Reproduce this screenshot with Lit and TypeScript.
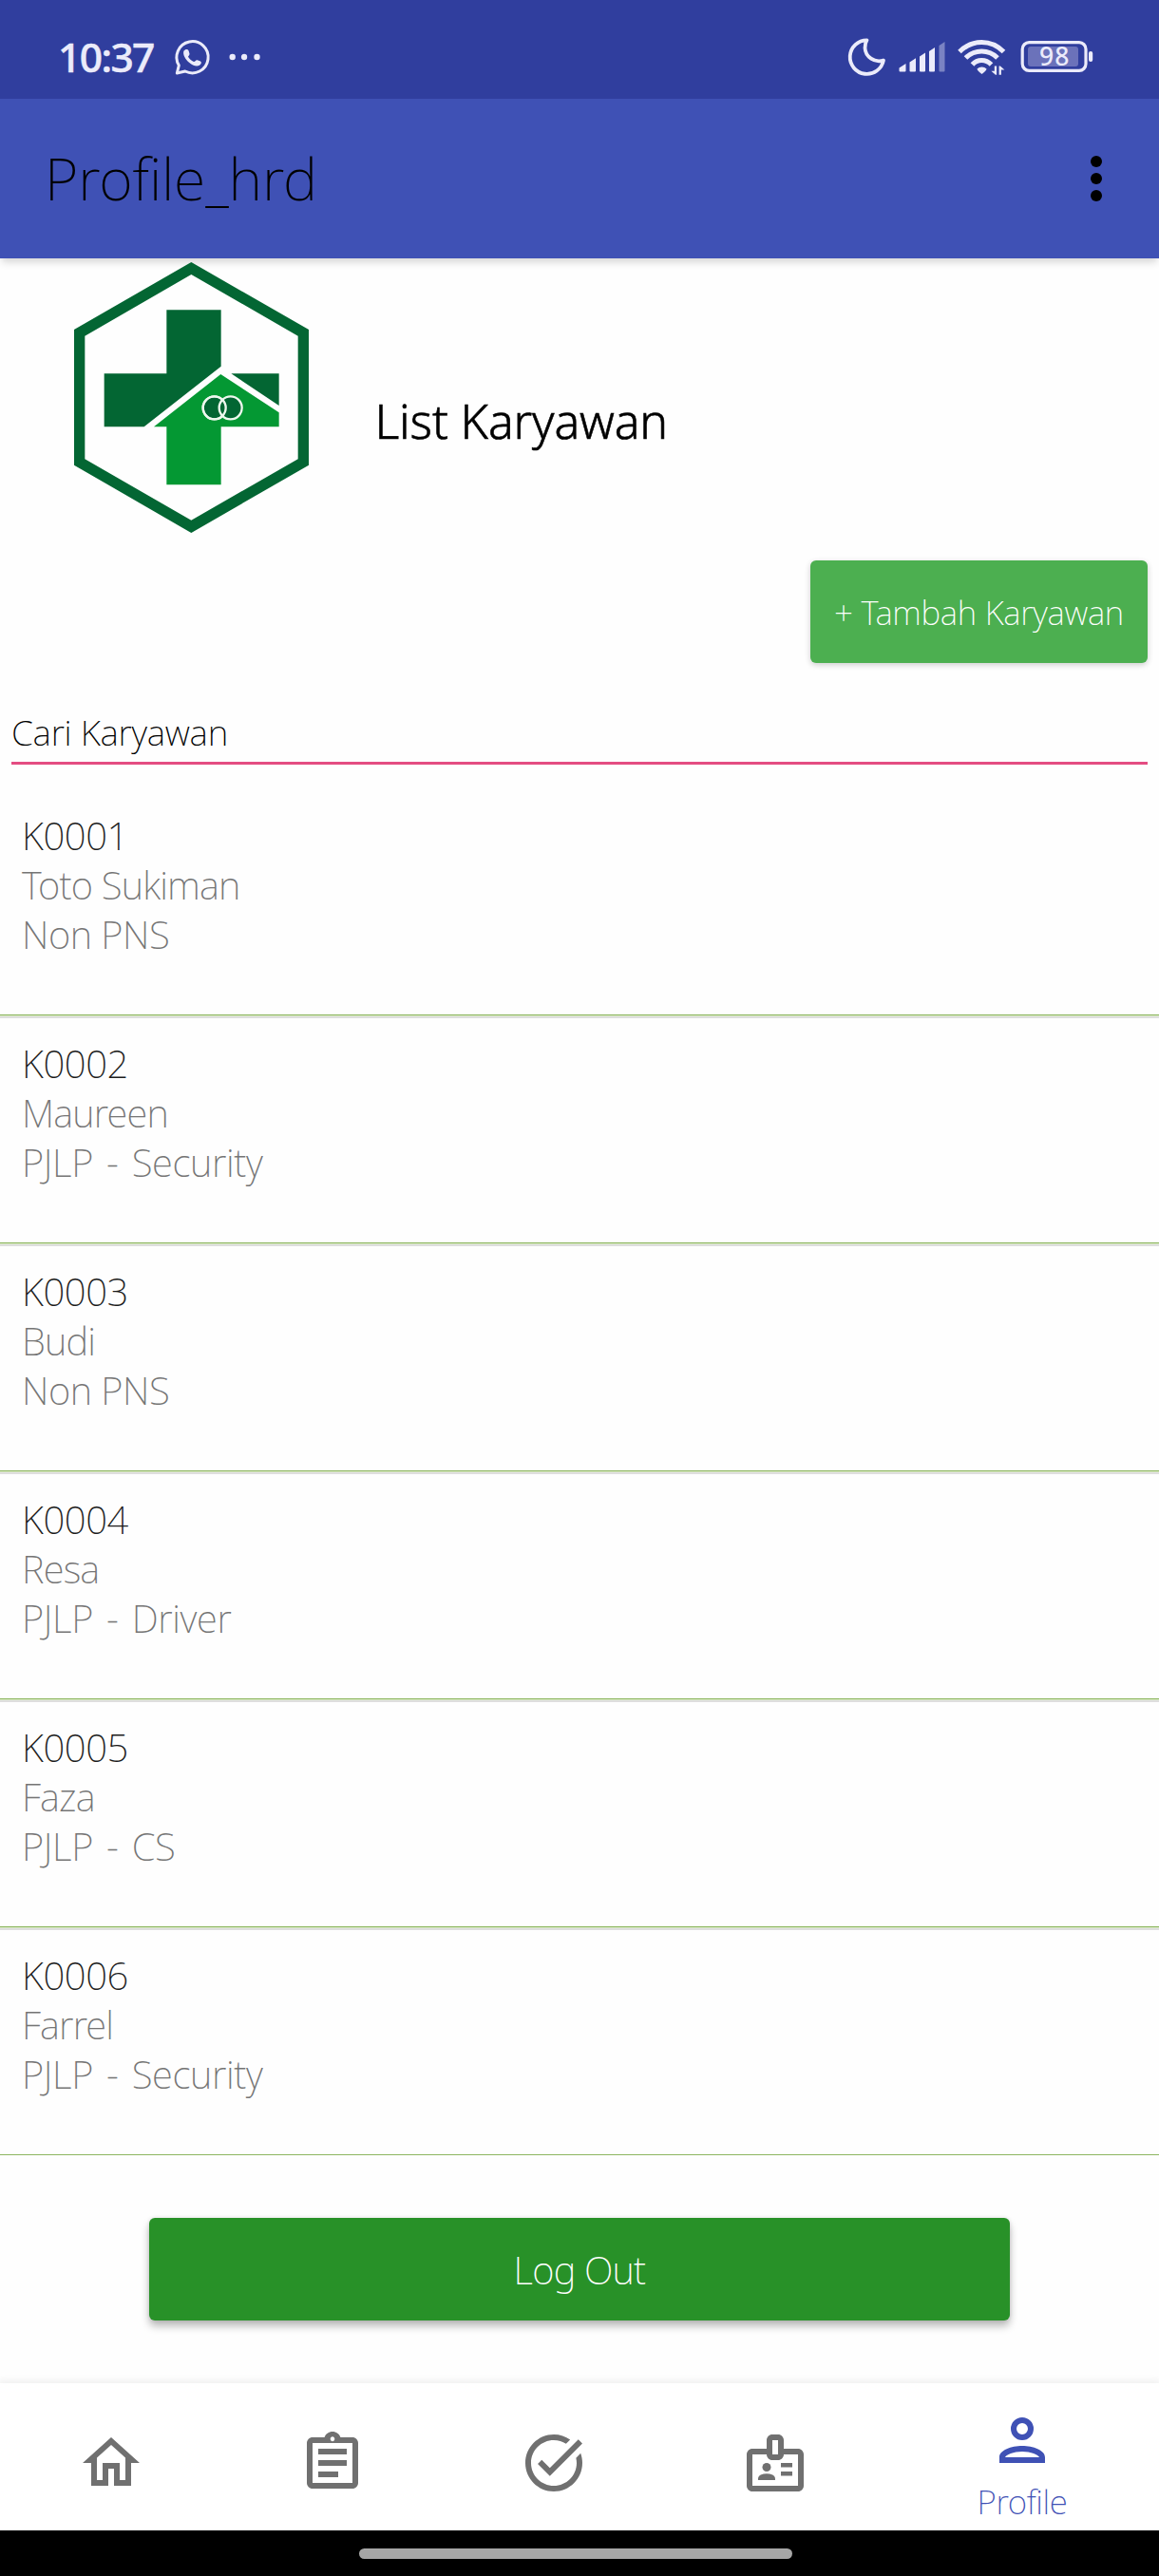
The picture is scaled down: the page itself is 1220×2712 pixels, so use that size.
import { LitElement, html, css, svg } from "lit";
import { customElement } from "lit/decorators.js";
import { classMap } from "lit/directives/class-map.js";

interface Employee {
  id: string;
  name: string;
  role: string;
}

const employees: Employee[] = [
  { id: "K0001", name: "Toto Sukiman", role: "Non PNS" },
  { id: "K0002", name: "Maureen", role: "PJLP - Security" },
  { id: "K0003", name: "Budi", role: "Non PNS" },
  { id: "K0004", name: "Resa", role: "PJLP - Driver" },
  { id: "K0005", name: "Faza", role: "PJLP - CS" },
  { id: "K0006", name: "Farrel", role: "PJLP - Security" },
];

const navIcons = [
  // home
  svg`<path d="M12 5.69l5 4.5V18h-2v-6H9v6H7v-7.81l5-4.5M12 3L2 12h3v8h6v-6h2v6h6v-8h3L12 3z"/>`,
  // clipboard
  svg`<path fill-rule="evenodd" d="M19 3h-4.18C14.4 1.84 13.3 1 12 1s-2.4.84-2.82 2H5c-1.1 0-2 .9-2 2v14c0 1.1.9 2 2 2h14c1.1 0 2-.9 2-2V5c0-1.1-.9-2-2-2zm-7-.25c.41 0 .75.34.75.75v.2c0 .41-.34.75-.75.75s-.75-.34-.75-.75v-.2c0-.41.34-.75.75-.75zM19 19H5V5h14v14z"/><path d="M7 7h10v2H7zM7 11h10v2H7zM7 15h7v2H7z"/>`,
  // task done
  svg`<path d="M22 5.18L10.59 16.6l-4.24-4.24 1.41-1.41 2.83 2.83 10-10L22 5.18zM19.79 10.22c.13.57.21 1.17.21 1.78 0 4.42-3.58 8-8 8s-8-3.58-8-8 3.58-8 8-8c1.58 0 3.04.46 4.28 1.25l1.44-1.44C16.1 2.67 14.13 2 12 2 6.48 2 2 6.48 2 12s4.48 10 10 10 10-4.48 10-10c0-1.19-.22-2.33-.6-3.39l-1.61 1.61z"/>`,
  // badge
  svg`<path fill-rule="evenodd" d="M20 7h-5V4c0-1.1-.9-2-2-2h-2c-1.1 0-2 .9-2 2v3H4c-1.1 0-2 .9-2 2v11c0 1.1.9 2 2 2h16c1.1 0 2-.9 2-2V9c0-1.1-.9-2-2-2zM11 4h2v5h-2V4zm9 16H4V9h5c0 1.1.9 2 2 2h2c1.1 0 2-.9 2-2h5v11z"/><circle cx="9" cy="13.5" r="1.5"/><path d="M11.08 16.18C10.44 15.9 9.74 15.75 9 15.75s-1.44.15-2.08.43c-.56.24-.92.78-.92 1.39V18h6v-.43c0-.61-.36-1.15-.92-1.39zM14 15h4v1.5h-4zM14 12h4v1.5h-4z"/>`,
];

@customElement("app-root")
export class AppRoot extends LitElement {
  static styles = css`
    :host {
      display: block;
      font-family: "Noto Sans", Roboto, sans-serif;
      font-weight: 250;
      font-variant-ligatures: none;
      color: #000;
    }
    * {
      box-sizing: border-box;
    }
    svg {
      display: block;
      flex: none;
    }
    .screen {
      width: 1220px;
      height: 2712px;
      display: flex;
      flex-direction: column;
      background: #fefefe;
      overflow: hidden;
      white-space: nowrap;
    }
    .status {
      height: 104px;
      flex: none;
      display: flex;
      align-items: center;
      padding: 16px 66px 0 61px;
      background: #303e9e;
      color: #ebebfa;
    }
    .clock {
      width: 119px;
      font-size: 42.5px;
      font-weight: 500;
      letter-spacing: -1.6px;
      line-height: 60px;
      -webkit-text-stroke: 0.5px #ebebfa;
    }
    .status-right {
      margin-left: auto;
    }
    .pct {
      font-size: 26.5px;
      font-weight: 500;
      letter-spacing: 1px;
    }
    .appbar {
      height: 168px;
      flex: none;
      display: flex;
      align-items: center;
      justify-content: space-between;
      padding: 0 60px 0 47px;
      background: #3f51b5;
      box-shadow: 0 6px 8px -2px rgba(0, 0, 0, 0.16);
    }
    .title {
      font-size: 61px;
      line-height: 84px;
      letter-spacing: -0.15px;
    }
    .head {
      height: 318px;
      flex: none;
      display: flex;
      padding: 4px 0 0 78px;
    }
    .heading {
      margin-left: 69.5px;
      padding-top: 132px;
      font-size: 50px;
      font-weight: 300;
      line-height: 70px;
      letter-spacing: -0.15px;
      -webkit-text-stroke: 0.6px #000;
    }
    .actions {
      flex: none;
      display: flex;
      justify-content: flex-end;
      padding-right: 12px;
    }
    .btn {
      height: 108px;
      border-radius: 6px;
      display: flex;
      align-items: center;
      justify-content: center;
      color: #fff;
    }
    .add {
      width: 355px;
      background: #4caf50;
      font-size: 35px;
      letter-spacing: -0.3px;
      box-shadow: 0 2px 6px rgba(0, 0, 0, 0.2);
    }
    .search {
      height: 107px;
      flex: none;
      margin: 0 12px;
      padding-top: 48px;
      border-bottom: 3px solid #e44d82;
      font-size: 37px;
      line-height: 50px;
      letter-spacing: -0.25px;
    }
    .list {
      flex: none;
      padding-top: 27px;
    }
    .item {
      height: 240px;
      padding: 22px 23px 0;
      font-size: 40px;
      line-height: 52px;
      color: #757575;
      border-bottom: 2px solid #dedede;
      display: flex;
      flex-direction: column;
    }
    .item::after {
      content: "";
      box-sizing: border-box;
      margin: auto -23px 0;
      height: 2px;
      flex: none;
      background: #d9e8c5;
      border-top: 1px solid #8db660;
    }
    .item:last-child {
      height: 237px;
      border-bottom: 0;
    }
    .item:last-child::after {
      height: 1px;
    }
    .id {
      color: #1c1c1c;
      letter-spacing: -0.4px;
    }
    .name {
      letter-spacing: -0.8px;
    }
    .role {
      letter-spacing: -0.5px;
    }
    .role.dashed {
      letter-spacing: -0.35px;
      word-spacing: 4px;
    }
    .footer {
      flex: 1;
      display: flex;
      justify-content: center;
      align-items: flex-start;
      padding-top: 66px;
    }
    .logout {
      width: 906px;
      background: #289128;
      font-size: 40px;
      letter-spacing: -0.8px;
      box-shadow: 0 6px 9px rgba(0, 0, 0, 0.27), 0 0 4px rgba(0, 0, 0, 0.1);
    }
    .nav {
      height: 155px;
      flex: none;
      display: flex;
      background: #fff;
      box-shadow: 0 0 8px 2px rgba(0, 0, 0, 0.07);
      fill: #707070;
    }
    .tab {
      width: 233px;
      padding-top: 48px;
      display: flex;
      justify-content: center;
    }
    .tab.active {
      width: 288px;
      padding-top: 24px;
      flex-direction: column;
      justify-content: flex-start;
      align-items: center;
      color: #3f51b5;
      fill: #3f51b5;
      font-size: 35px;
      line-height: 48px;
      letter-spacing: -0.4px;
    }
    .label {
      padding-top: 5px;
    }
    .gesture {
      height: 48px;
      flex: none;
      background: #000;
      display: flex;
      justify-content: center;
      padding: 19px 8px 0 0;
    }
    .pill {
      width: 456px;
      height: 11px;
      border-radius: 6px;
      background: #a6a6a6;
    }
  `;

  private statusBar() {
    return html`<div class="status">
      <span class="clock">10:37</span>
      <svg width="100" height="44" viewBox="180 38 100 44">
        <path d="M186.3 77l2-8.2a16.6 16.6 0 1 1 6.6 6.2z" fill="none" stroke="#ebebfa" stroke-width="3" stroke-linejoin="round"/>
        <path d="M193.5 53.5c1.5-2 4-2.2 5-.2l1 3.2c.3 1.6-1.5 2.4-1.5 3.3 1.2 2.2 3.4 4.2 6 5.2 1.2.2 2-2.3 3.8-1.8l3.2 1.4c1.6 1 .6 3.4-1 4.2-3 1.6-7.5.2-11-3-3.8-3.5-7-8.3-5.5-12.3z" fill="#ebebfa"/>
        <g fill="#ebebfa"><circle cx="244.7" cy="60" r="3.2"/><circle cx="257" cy="60" r="3.2"/><circle cx="270.5" cy="60" r="3.2"/></g>
      </svg>
      <svg class="status-right" width="264" height="44" viewBox="890 38 264 44">
        <path d="M912.5 42.3A17.8 17.8 0 1 0 930 63.5C920.5 66.5 911 60 910.5 50.5 910.4 47.5 911 44.6 912.5 42.3z" fill="none" stroke="#ebebfa" stroke-width="3.8" stroke-linejoin="round"/>
        <g fill="#ebebfa">
          <path d="M946.5 71.5l7-4.5v7.5q0 1-1 1h-5q-1 0-1-1zM957.5 65.5l6.5-4.2v13.2q0 1-1 1h-4.5q-1 0-1-1zM968 59.5l6-4v19q0 1-1 1h-4q-1 0-1-1zM978 54l6-4v24.5q0 1-1 1h-4q-1 0-1-1z"/>
          <path d="M988.5 48l6-4v30.5q0 1-1 1h-4q-1 0-1-1z" opacity=".4"/>
          <path d="M1028.5 72.5q2-2 5-2t5 2q0 1.5-5 5.5-5-4-5-5.5z"/>
          <path d="M1046.8 69.5h2.3v9.3h-1.2l-4.5-4h3.4zM1051.6 78.8h2.3v-5.3h3.5l-4.5-4h-1.3z"/>
        </g>
        <g fill="none" stroke="#ebebfa" stroke-width="5">
          <path d="M1010 54.5Q1020 44.5 1033.3 44.5T1056.5 54.5"/>
          <path d="M1016.5 61Q1023.5 54 1033.3 54T1050 61"/>
          <path d="M1023.5 68Q1027.5 63.5 1033.3 63.5T1043.5 68"/>
        </g>
        <rect x="1076.2" y="44.7" width="66.8" height="29.6" rx="7" fill="none" stroke="#ebebfa" stroke-width="3.2"/>
        <rect x="1082" y="49" width="53" height="21" rx="3" fill="#6b72ba"/>
        <rect x="1146" y="54" width="4.2" height="11" rx="2" fill="#ebebfa"/>
        <text class="pct" x="1094" y="69" fill="#ebebfa">98</text>
      </svg>
    </div>`;
  }

  private logo() {
    return html`<svg width="247" height="285" viewBox="84 32 741 855">
      <path fill="#036633" fill-rule="evenodd" d="M454 32L825 245V673L454 887 84 673V245zM454 71L118 265V654L454 847 791 654V265z"/>
      <path fill="#036633" d="M376 183H548V361L305 552H179V384H376zM580 384H731V485z"/>
      <path fill="#049833" d="M547 386L731 507V552H548V735H376V552H336z"/>
      <g fill="#036633" stroke="#eef8ee" stroke-width="7"><circle cx="527" cy="492" r="36"/><circle cx="578" cy="492" r="36"/></g>
      <circle cx="527" cy="492" r="36" fill="none" stroke="#eef8ee" stroke-width="7"/>
    </svg>`;
  }

  render() {
    return html`<div class="screen">
      ${this.statusBar()}
      <header class="appbar">
        <span class="title">Profile_hrd</span>
        <svg width="12" height="48" viewBox="0 0 12 48">
          <circle cx="6" cy="6" r="6"/><circle cx="6" cy="24" r="6"/><circle cx="6" cy="42" r="6"/>
        </svg>
      </header>
      <div class="head">
        ${this.logo()}
        <div class="heading">List Karyawan</div>
      </div>
      <div class="actions"><div class="btn add">+ Tambah Karyawan</div></div>
      <div class="search">Cari Karyawan</div>
      <div class="list">
        ${employees.map(
          (e) => html`<div class="item">
            <div class="id">${e.id}</div>
            <div class="name">${e.name}</div>
            <div class=${classMap({ role: true, dashed: e.role.includes(" - ") })}>${e.role}</div>
          </div>`
        )}
      </div>
      <div class="footer"><div class="btn logout">Log Out</div></div>
      <nav class="nav">
        ${navIcons.map(
          (icon) => html`<div class="tab"><svg width="72" height="72" viewBox="0 0 24 24">${icon}</svg></div>`
        )}
        <div class="tab active">
          <svg width="72" height="72" viewBox="0 0 24 24">
            <path fill-rule="evenodd" d="M12 4a4 4 0 1 0 0 8 4 4 0 0 0 0-8zm0 2a2 2 0 1 1 0 4 2 2 0 0 1 0-4zM12 14c-3.8 0-8 1.5-8 4v2h16v-2c0-2.5-4.2-4-8-4zm-6 4c.3-.8 3-2 6-2s5.7 1.2 6 2z"/>
          </svg>
          <span class="label">Profile</span>
        </div>
      </nav>
      <div class="gesture"><div class="pill"></div></div>
    </div>`;
  }
}
